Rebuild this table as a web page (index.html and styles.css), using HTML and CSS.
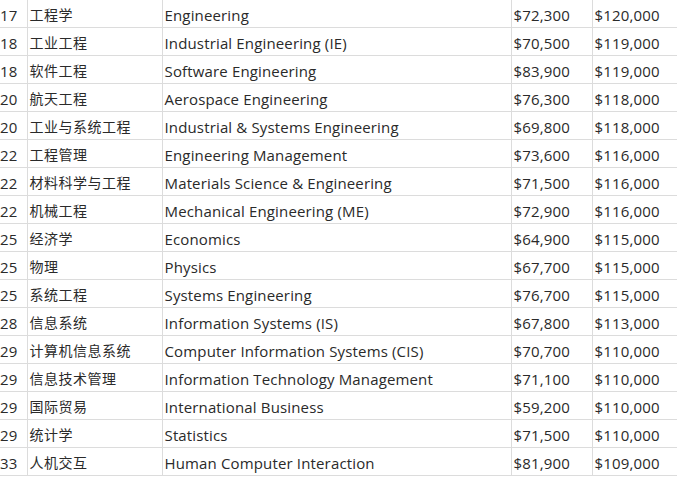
FILE: index.html
```html
<!DOCTYPE html>
<html>
<head>
<meta charset="utf-8">
<link rel="stylesheet" href="styles.css">
</head>
<body>
<table class="salary">
<colgroup><col class="c-rank"><col class="c-cn"><col class="c-en"><col class="c-s1"><col class="c-s2"></colgroup>
<tbody>
<tr><td>17</td><td class="cn">工程学</td><td>Engineering</td><td>$72,300</td><td>$120,000</td></tr>
<tr><td>18</td><td class="cn">工业工程</td><td>Industrial Engineering (IE)</td><td>$70,500</td><td>$119,000</td></tr>
<tr><td>18</td><td class="cn">软件工程</td><td>Software Engineering</td><td>$83,900</td><td>$119,000</td></tr>
<tr><td>20</td><td class="cn">航天工程</td><td>Aerospace Engineering</td><td>$76,300</td><td>$118,000</td></tr>
<tr><td>20</td><td class="cn">工业与系统工程</td><td>Industrial &amp; Systems Engineering</td><td>$69,800</td><td>$118,000</td></tr>
<tr><td>22</td><td class="cn">工程管理</td><td>Engineering Management</td><td>$73,600</td><td>$116,000</td></tr>
<tr><td>22</td><td class="cn">材料科学与工程</td><td>Materials Science &amp; Engineering</td><td>$71,500</td><td>$116,000</td></tr>
<tr><td>22</td><td class="cn">机械工程</td><td>Mechanical Engineering (ME)</td><td>$72,900</td><td>$116,000</td></tr>
<tr><td>25</td><td class="cn">经济学</td><td>Economics</td><td>$64,900</td><td>$115,000</td></tr>
<tr><td>25</td><td class="cn">物理</td><td>Physics</td><td>$67,700</td><td>$115,000</td></tr>
<tr><td>25</td><td class="cn">系统工程</td><td>Systems Engineering</td><td>$76,700</td><td>$115,000</td></tr>
<tr><td>28</td><td class="cn">信息系统</td><td>Information Systems (IS)</td><td>$67,800</td><td>$113,000</td></tr>
<tr><td>29</td><td class="cn">计算机信息系统</td><td>Computer Information Systems (CIS)</td><td>$70,700</td><td>$110,000</td></tr>
<tr><td>29</td><td class="cn">信息技术管理</td><td>Information Technology Management</td><td>$71,100</td><td>$110,000</td></tr>
<tr><td>29</td><td class="cn">国际贸易</td><td>International Business</td><td>$59,200</td><td>$110,000</td></tr>
<tr><td>29</td><td class="cn">统计学</td><td>Statistics</td><td>$71,500</td><td>$110,000</td></tr>
<tr><td>33</td><td class="cn">人机交互</td><td>Human Computer Interaction</td><td>$81,900</td><td>$109,000</td></tr>
</tbody>
</table>
</body>
</html>
```
FILE: styles.css
```css
html, body {
  margin: 0;
  padding: 0;
  background: #ffffff;
}
.salary {
  border-collapse: collapse;
  table-layout: fixed;
  width: 677px;
  margin-top: -1px;
  font-family: "Open Sans", "Noto Sans CJK SC", sans-serif;
  font-size: 15px;
  letter-spacing: 0.15px;
  color: #2a2a2a;
}
.c-rank { width: 27px; }
.c-cn { width: 135px; }
.c-en { width: 349px; }
.c-s1 { width: 81px; }
.c-s2 { width: 85px; }
.salary td {
  height: 28px;
  padding: 3px 0 0 2px;
  border: 1px solid #dcdcdc;
  white-space: nowrap;
  overflow: hidden;
  line-height: 20px;
  box-sizing: border-box;
}
.salary td.cn {
  font-size: 14px;
  letter-spacing: 0.5px;
}
.salary td:first-child {
  border-left: none;
  padding-left: 0;
}
```
